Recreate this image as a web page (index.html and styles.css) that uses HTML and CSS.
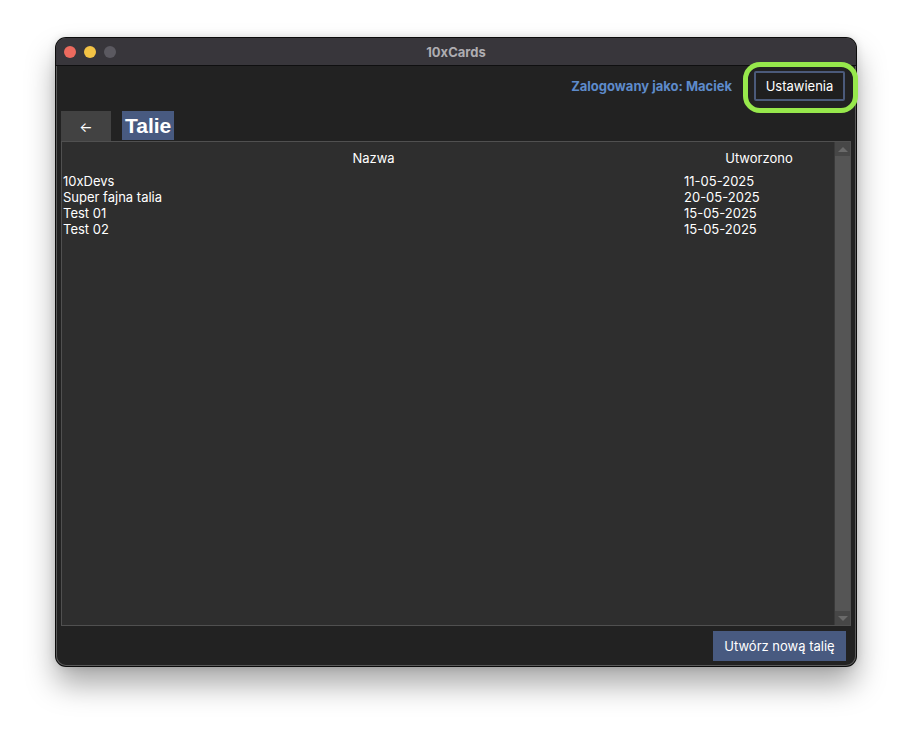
FILE: index.html
```html
<!DOCTYPE html>
<html lang="pl">
<head>
<meta charset="utf-8">
<title>10xCards</title>
<link rel="stylesheet" href="styles.css">
</head>
<body>
<div class="window">
  <div class="titlebar">
    <div class="lights">
      <span class="light red"></span>
      <span class="light yellow"></span>
      <span class="light grey"></span>
    </div>
    <div class="title">10xCards</div>
  </div>
  <div class="content">
    <div class="topbar">
      <span class="user">Zalogowany jako: Maciek</span>
      <button class="settings">Ustawienia</button>
    </div>
    <div class="headrow">
      <button class="back">&#8592;</button>
      <h1 class="heading">Talie</h1>
    </div>
    <div class="table">
      <div class="tbody">
        <div class="row head">
          <div class="c-name center">Nazwa</div>
          <div class="c-date center">Utworzono</div>
        </div>
        <div class="row"><div class="c-name">10xDevs</div><div class="c-date">11-05-2025</div></div>
        <div class="row"><div class="c-name">Super fajna talia</div><div class="c-date">20-05-2025</div></div>
        <div class="row"><div class="c-name">Test 01</div><div class="c-date">15-05-2025</div></div>
        <div class="row"><div class="c-name">Test 02</div><div class="c-date">15-05-2025</div></div>
      </div>
      <div class="scrollbar">
        <div class="arrow up"></div>
        <div class="track"></div>
        <div class="arrow down"></div>
      </div>
    </div>
    <div class="footer">
      <button class="create">Utwórz nową talię</button>
    </div>
  </div>
</div>
</body>
</html>
```

FILE: styles.css
```css
* { box-sizing: border-box; }
html, body { margin: 0; padding: 0; background: #ffffff; }
body {
  width: 912px; height: 740px;
  font-family: Inter, "Noto Sans", "Liberation Sans", sans-serif;
  font-size: 13px;
  color: #ffffff;
  padding: 38px 0 0 56px;
}
.window {
  width: 800px; height: 628px;
  border-radius: 10px;
  background: #222222;
  box-shadow: 0 0 0 1px #0c0c0c, 0 0 0 1px #5a5a5a inset, 0 18px 30px rgba(0,0,0,0.35), 0 0 10px rgba(0,0,0,0.15);
  display: flex; flex-direction: column;
}
.titlebar {
  height: 28px;
  background: #38363b;
  border-bottom: 1px solid #0f0f10;
  border-radius: 10px 10px 0 0;
  display: flex; align-items: center;
  position: relative;
  flex: none;
}
.lights { display: flex; gap: 8px; padding-left: 8px; }
.light { width: 12px; height: 12px; border-radius: 50%; display: block; }
.red { background: #ec6a5e; }
.yellow { background: #f3c345; }
.grey { background: #5b5960; }
.title {
  position: absolute; left: 0; right: 0; top: 0; bottom: 0;
  display: flex; align-items: center; justify-content: center;
  font-weight: 700; color: #aeadb1; font-size: 13px;
}
.content {
  flex: 1;
  display: flex; flex-direction: column;
  padding: 5px 5px 5px 5px;
}
.topbar {
  display: flex; justify-content: flex-end; align-items: center;
  gap: 22px;
  padding-right: 6px;
  height: 30px;
  flex: none;
}
.user { color: #5e8bcb; font-weight: 700; }
.settings {
  position: relative;
  font: inherit; color: #ffffff;
  background: #1f1f1f;
  border: 2px solid #4b5a7a;
  border-radius: 2px;
  width: 91px; height: 30px;
  padding: 0;
}
.settings::after {
  content: "";
  position: absolute;
  left: -13px; right: -15px; top: -11px; bottom: -14px;
  border: 5px solid #97e84c;
  border-radius: 17px;
}
.headrow {
  display: flex; align-items: stretch; gap: 11px;
  margin-top: 10px;
  height: 30px;
  flex: none;
}
.back {
  width: 50px; height: 30px;
  background: #424242; border: none; color: #ffffff;
  font: inherit; font-size: 14px; padding: 0;
}
.heading {
  margin: 0;
  background: #485a80;
  height: 29px;
  padding: 0 3px;
  font-family: "Liberation Sans", Arial, sans-serif;
  font-size: 21px; font-weight: 700;
  line-height: 29px;
}
.table {
  flex: 1;
  display: flex;
  background: #2e2e2e;
  border: 1px solid #505050;
}
.tbody { flex: 1; padding: 8px 0 0 1px; }
.row { display: flex; height: 16px; line-height: 16px; }
.row.head { height: 23px; }
.c-name { width: 621px; }
.c-date { flex: 1; }
.center { text-align: center; }
.scrollbar {
  width: 16px;
  background: #4b4b4b;
  border-left: 1px solid #3a3a3a;
  display: flex; flex-direction: column;
}
.arrow { height: 14px; display: flex; align-items: center; justify-content: center; background: #474747; }
.arrow.up::before {
  content: ""; border-left: 5px solid transparent; border-right: 5px solid transparent;
  border-bottom: 5px solid #6a6a6a;
}
.arrow.down::before {
  content: ""; border-left: 5px solid transparent; border-right: 5px solid transparent;
  border-top: 5px solid #6a6a6a;
}
.track { flex: 1; background: #555555; }
.footer {
  display: flex; justify-content: flex-end;
  padding: 5px 5px 0 0;
  flex: none;
}
.create {
  font: inherit; color: #ffffff;
  background: #485a80; border: none;
  width: 133px; height: 30px; padding: 0;
}
```
